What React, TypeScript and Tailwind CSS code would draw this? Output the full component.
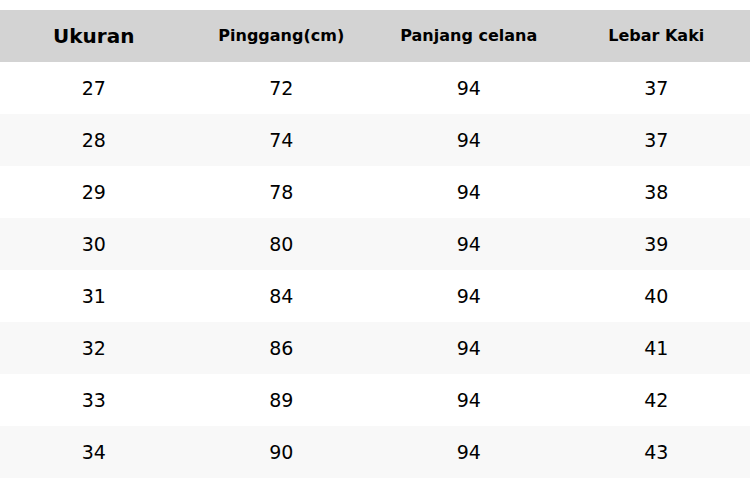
const rows = [
  ["27", "72", "94", "37"],
  ["28", "74", "94", "37"],
  ["29", "78", "94", "38"],
  ["30", "80", "94", "39"],
  ["31", "84", "94", "40"],
  ["32", "86", "94", "41"],
  ["33", "89", "94", "42"],
  ["34", "90", "94", "43"],
];

export default function App() {
  return (
    <div className="w-[750px] h-[478px] bg-white pt-[10px] text-black font-['DejaVu_Sans',sans-serif]">
      <div className="grid grid-cols-4 h-[52px] bg-[#d3d3d3] items-center text-center font-bold">
        <div className="text-[20px]">Ukuran</div>
        <div className="text-[16px]">Pinggang(cm)</div>
        <div className="text-[16px]">Panjang celana</div>
        <div className="text-[16px]">Lebar Kaki</div>
      </div>
      {rows.map((r, i) => (
        <div
          key={i}
          className={`grid grid-cols-4 h-[52px] items-center text-center text-[19px] ${i % 2 === 1 ? "bg-[#f8f8f8]" : "bg-white"}`}
        >
          {r.map((c, j) => (
            <div key={j}>{c}</div>
          ))}
        </div>
      ))}
    </div>
  );
}
